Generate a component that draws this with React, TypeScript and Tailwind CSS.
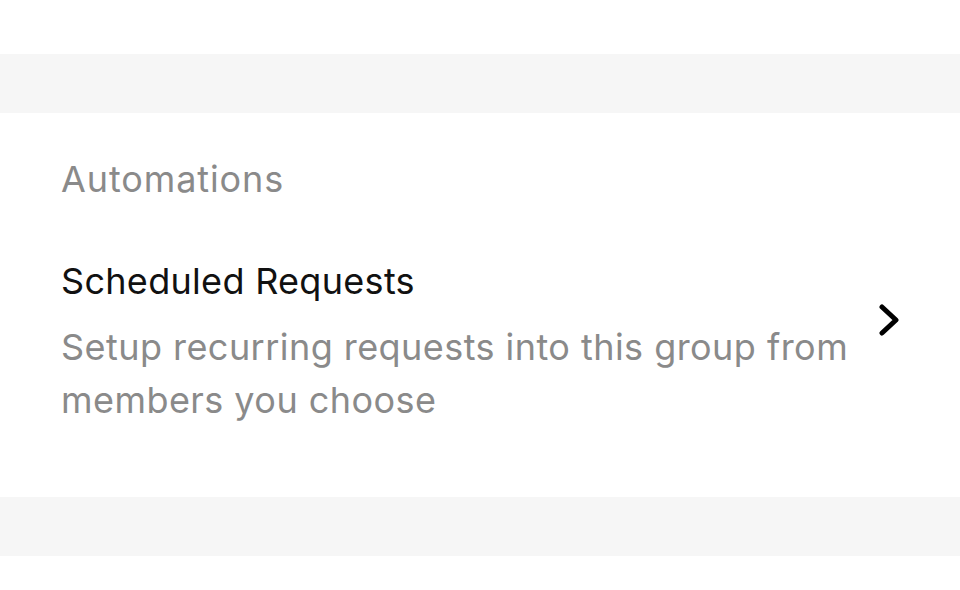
export default function App() {
  return (
    <div className="min-h-[590px] bg-white font-['Inter',sans-serif]">
      <div className="h-[54px]" />
      <div className="h-[59px] bg-[#f6f6f6]" />
      <section className="px-[61px] pt-[41px] pb-[70px]">
        <h2 className="text-[36px] leading-[51px] tracking-[0.9px] text-[#8a8a8a]">Automations</h2>
        <div className="mt-[51px] flex items-start">
          <div className="flex-1">
            <div className="text-[36px] leading-[51px] tracking-[0.3px] text-[#111]">Scheduled Requests</div>
            <p className="mt-[14px] text-[36px] leading-[53px] tracking-[0.45px] text-[#8a8a8a]">
              Setup recurring requests into this group from members you choose
            </p>
          </div>
          <svg
            className="ml-[20px] mt-[48px] shrink-0"
            width="20"
            height="32"
            viewBox="0 0 20 32"
            fill="none"
            stroke="#000"
            strokeWidth="5"
            strokeLinecap="round"
            strokeLinejoin="round"
          >
            <path d="M3 3 L17 16 L3 29" />
          </svg>
        </div>
      </section>
      <div className="h-[59px] bg-[#f6f6f6]" />
    </div>
  )
}
